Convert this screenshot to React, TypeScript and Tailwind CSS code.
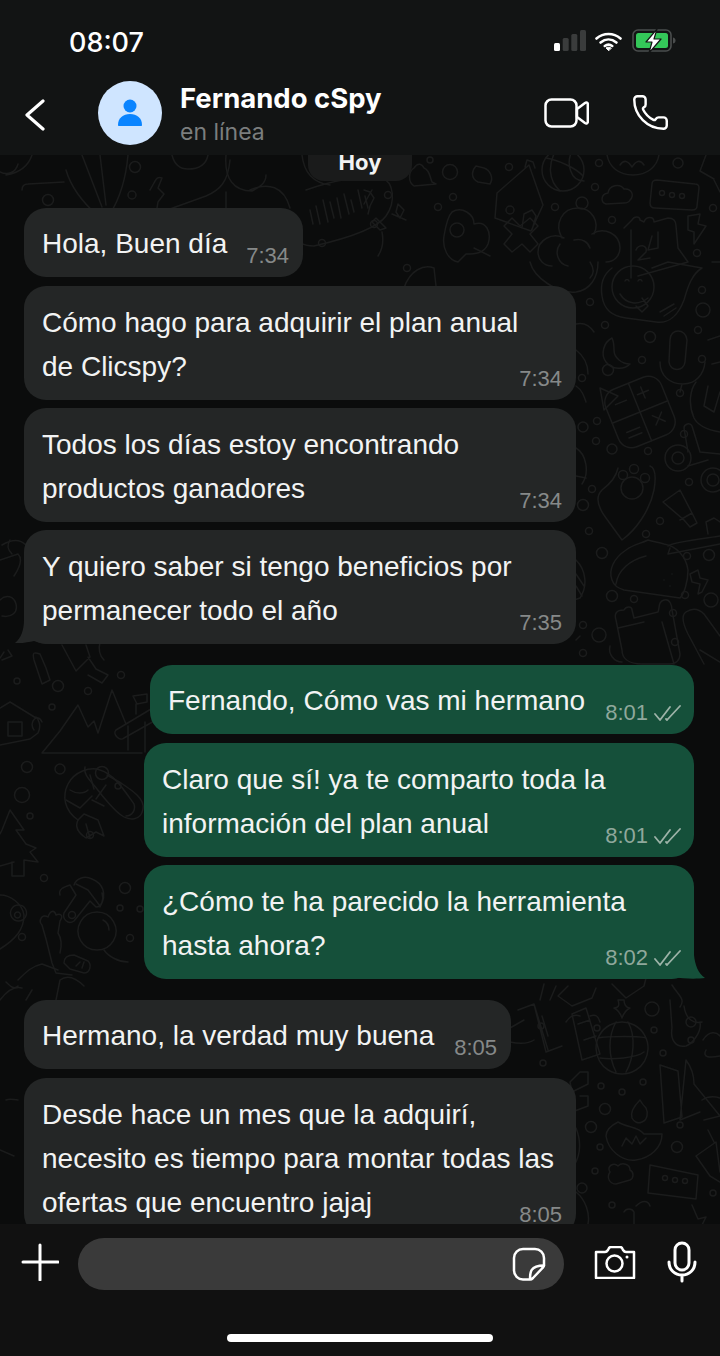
import type { ReactNode } from "react";
import { Phone } from "lucide-react";

const dots: [number, number, number][] = [
  [48, 200, 5.5], [135, 167, 5.5], [132, 195, 4], [430, 160, 3], [450, 172, 7.5], [509, 167, 3.5], [388, 195, 3.5], [453, 197, 3.5], [438, 207, 3.5], [374, 224, 3.5],
  [322, 243, 3.5], [457, 230, 7], [407, 268, 3.5], [599, 163, 3.5], [678, 163, 5], [595, 187, 3.5], [582, 203, 6], [555, 207, 3.5], [612, 220, 3.5], [713, 208, 3.5],
  [697, 253, 3.5], [702, 290, 3.5], [703, 310, 7], [698, 330, 3.5], [590, 302, 3.5], [605, 325, 3.5], [650, 337, 5.5], [642, 360, 3.5], [608, 370, 5.5], [702, 359, 3.5],
  [582, 378, 3.5], [680, 393, 3.5], [597, 421, 3.5], [583, 427, 5], [596, 441, 3.5], [612, 449, 5], [648, 451, 3.5], [684, 434, 3.5], [689, 482, 3.5], [592, 489, 3.5],
  [583, 505, 5.5], [660, 521, 3.5], [646, 534, 3.5], [589, 531, 3.5], [602, 553, 5.5], [687, 556, 3.5], [709, 555, 5.5], [612, 596, 5.5], [634, 599, 3.5], [685, 595, 3.5],
  [711, 600, 7], [673, 613, 3.5], [583, 625, 3.5], [599, 635, 7], [675, 642, 3.5], [583, 653, 3.5], [563, 170, 21], [633, 287, 21],
  [17, 681, 3], [58, 686, 5.5], [88, 691, 3.5], [52, 707, 3], [121, 675, 3.5], [27, 767, 5.5], [60, 769, 5], [118, 786, 3], [22, 795, 7.5], [30, 816, 3], [90, 835, 3.5],
  [44, 878, 3.5], [125, 888, 5.5], [120, 908, 3], [72, 915, 3.5], [22, 937, 3.5], [130, 938, 3.5], [140, 909, 3], [102, 773, 6.5],
  [597, 1028, 3], [541, 1026, 3], [652, 1009, 7], [654, 1030, 3], [691, 1022, 5], [691, 1040, 3], [663, 1053, 3], [543, 1063, 3], [601, 1086, 3], [622, 1092, 3],
  [643, 1082, 3], [605, 1109, 5.5], [591, 1127, 5.5], [600, 1147, 3], [680, 1125, 3], [677, 1147, 5.5], [595, 1171, 3], [582, 1188, 5], [612, 1205, 3], [713, 1193, 3],
  [665, 1178, 2.5], [675, 1180, 2.5], [685, 1181, 2.5], [662, 193, 2.5], [672, 195, 2.5], [682, 196, 2.5], [510, 210, 4], [623, 475, 4.5], [634, 469, 4.5], [645, 478, 4.5],
  [632, 488, 11], [678, 458, 13], [678, 458, 6], [713, 480, 12], [713, 480, 6],
];

const doodles: string[] = [
  // top strip
  "M0 172c8 4 16 0 18-8M32 155c-4 12-14 18-26 20", "M22 190c0-4 2-6 6-6l36-2", "M66 170c4 14 14 30 32 46l12-2c10-16 16-36 18-59M82 155l20 52M100 155l6 50",
  "M150 190c6-10 6-14 12-12l-4 10 6 6-6 8-2 12 50-18c14-6 22-14 24-36M172 155c2 8 6 14 16 14s18-4 20-14",
  "M226 155c-2 24 8 36 26 36 8-4 14-8 14-16M226 192v20M250 190c18-8 34-4 40 18", "M302 155c2 18 12 28 28 30M414 168c4-6 8-4 10 0 6 2 6 10 8 14l4 2-22 2c-6-4-6-14 0-18z",
  "M306 190c28-10 62-16 76-12 12 4 14 24 4 38-10 14-46 24-72 30-12 0-18-4-18-14",
  "M310 210l3 14M316 206l4 18M323 200l5 22M330 202l4 16M337 198l4 20M344 194l5 20M351 200l3 12M358 190l4 18M365 196l3 12",
  "M364 190l6 2 4 6-4 8-2 8M372 190l-8 14", "M386 228l-10-10-4 4 8 8zM382 232c2 10 0 18-4 24", "M396 212l2-8 6 6-4 8zM392 214l14 6",
  "M452 212c10-6 22 2 22 12 12-4 18 8 14 20-4 10-14 10-22 10l-8 8c-10-2-16-14-14-26 2-12 4-20 8-24z",
  "M474 248l16 8M404 288c6-18 20-24 30-20l2 18", "M520 226l-8-8-8 8 8 8-8 10 8 8 10-8 8 8 8-8-8-10 8-8-8-8z",
  "M476 166c-4 4-6 12 2 16l12 2c4-6 0-14-6-16z",
  // house, ball, lotus
  "M497 193l32-28 14 40-12 26-36-13zM525 167l2-7 6 2 2 6M522 228l2-14 8-4 4 6-4 14",
  "M546 158c12 2 30 10 37 18M556 150c-8 14-8 30 4 41M572 151c-6 12-2 30 12 30", "M607 155c2 12 12 20 26 20s24-8 26-20M620 165c4-6 8-4 12 2 4-6 8-8 12-2",
  "M652 184c0-3 2-4 5-4l38 4c3 0 4 2 4 4l-2 18c0 3-2 4-5 4l-37-2c-3 0-5-2-5-5z", "M606 204c-6-2-5-10 2-11 1-8 12-10 16-4 7-1 11 6 6 11-1 2-3 3-6 3z",
  // flower
  "M562 238c-8-14 0-30 16-30 14 0 22 14 16 26", "M564 238c-12-6-26 2-26 14 0 8 6 14 14 14", "M592 234c12-8 28 0 28 14 0 8-6 14-14 14", "M560 244c-6 8-2 20 8 22M574 240c8-2 14 2 16 8",
  "M530 262c4 16 28 32 46 30 14-2 22-14 22-30M590 262c4 6 4 12 0 16",
  // smiley + cake
  "M612 268c-8 6-12 16-10 28 2 14 10 20 24 22l30 4c12 2 22-6 28-22 4-14 8-26 18-32l-34-6-16 6", "M625 281c1-2 3-2 4 0M638 281c1-2 3-2 4 0M620 294c6 10 18 12 28 4M642 298l6 8-6 6-6-6",
  "M660 312l14-8M664 316l12-8", "M624 228l8-8c2-4 8-4 8 0l4 2c2-6 10-6 10 0l14-4c6 0 8 4 8 8l2 22 10 14-50 14M631 230v48", "M636 250c2-6 12-6 10 2l-8 8 12-2M652 236l-4 14 10-2M658 232v16",
  "M688 216l12-2-2 10 8 2-12 18v-12l-6-2z", "M712 262h8M714 180l6 12M706 155l-6 16 14 8",
  // moon, mic
  "M612 338c-8 4-12 16-6 24 6 8 18 8 24 2-8 0-16-6-16-14 0-4 0-8-2-12z", "M670 340c0-12 16-12 17 0l-2 22c-1 10-15 10-16 0zM660 362c0 14 10 22 23 22s21-10 22-22M682 384l-2 8",
  "M708 340l12-4M712 364l8-2", "M576 350c8 6 12 14 12 24M576 324c8-2 14 2 18 8",
  "M600 388l18 8-14 14zM576 386c6 4 8 10 10 16", "M696 382c-6 8-8 22-2 36 4 8 14 12 26 14M708 386l-4 20 10 6 6-20", "M576 448c10 6 14 24 6 36M576 476l10 2M576 560c10 10 12 26 4 38l-6 2M576 574l8 12M576 586l6 10",
  // paw, thimble, knife
  "M618 468c-2 10-8 16-16 22-8 8-2 20 4 28l16 22c14-10 28-30 32-50 2-12 2-22-4-24", "M663 502l17-12 12 23 5 10-7 4-6-7zM680 520l12-7",
  "M668 546c4-4 40-8 52-10M670 548l-2 6 52-10M708 534l-2-12 8-4 6 4", "M688 452l-4-24c0-4 6-6 8-2l8 26M688 466l20-6M700 452l20 2", "M690 574l8-4 2 8 8 2-6 12-4 2 2-10-8-2z",
  // taco, bag, rocket
  "M612 580c-4-10 2-22 14-30 8-6 14-6 22-10 6 2 10 2 16 4 12 2 22 12 24 26 0 12-4 24-8 28l-56-8c-6-2-10-4-12-10zM616 584c2-14 14-24 30-28", "M664 580h.01M672 574h.01M670 586h.01",
  "M616 620c-2-6 0-10 8-10 2-4 8-4 8 0l2 8 24-6c2-6 0-10 6-12 6-2 8 6 8 10l8 44c0 6-4 10-10 10h-28c-14 0-20-6-20-14zM618 628l26-6M662 622l12 42", "M610 646c-2 8 4 16 12 16",
  "M686 612c6-4 12-4 18 2l16 22M686 612c-6 4-2 14 2 22l16 30M700 650l20 12M576 640l4-4",
  // left
  "M2 545c10-6 18-6 24 0M0 600c6-6 14-4 16 4 2 8-4 14-14 12", "M0 560l18-6c6 6 0 16-4 22", "M2 660l10-4-4-6M0 658l4-6", "M10 540c-4 6-2 10 2 14",
  "M34 660c-2-8 0-8 6-6l6 14 4 12-8 4zM62 645l14 26 14-14-4-12M88 657l8 12 12 6-6 8-14-8M100 642c-2 8 0 14 4 18",
  "M0 708l10-6 26 16M0 745l30-6 8-6c4-8 0-14-2-16M8 722h14v14H8zM34 730c-6-8 4-18 8-8",
  "M42 753l18-22 18-26 10 22 6-6 4 12 14-43 14 34M42 753h100M116 730l40-24M124 738l32-18M116 730c-4 4 4 12 8 8M133 696l14-2v8l-10 2zM136 704v10", "M128 726v24M145 722v30",
  "M85 767c-2 8 6 14 12 22 6 8 18 22 24 26 8 6 20 6 22-6 2-10-10-18-22-26l-14-8",
  "M78 820c-14-10-16-24-10-36 6-12 22-18 32-14 14 4 24 20 34 34 2 6-2 12-8 12", "M66 800l14 8 12-12M70 790c6 4 14 4 18 0M90 775l4 14M106 785l-10 14M104 806l-12-6",
  "M78 820c-4 8 2 14 8 18l10-6 8 4-6-16-14-6zM90 838l-4-14",
  "M10 810l-8 20-2 4M10 810l14 20-8 0 10 14 10 4-6 4 8 10-14-2v16h-12v-14M0 866l14-4",
  "M60 895c-2-6 4-8 10-10l6 10-12 18c-2 6 4 12 10 8l16-20 6 6c6 0 8-8 6-14M74 885c2-6 10-10 18-6 10 4 16 14 8 28", "M76 884l12 6 12 16",
  "M0 895c10 0 22 8 24 20 0 14-8 24-24 34", "M18 905a8 8 0 1 0 1 0M17 912a3 3 0 1 0 1 0",
  "M42 925c-4-4 0-12 6-8 2-6 6-8 8-2 4-2 8 0 4 6l-2 12c4 6 4 12 2 20M42 925l4 14 6 24 4 10 16 2",
  "M97 912a19 19 0 1 0 .1 0M103 920c4 2 6 6 6 10", "M104 950c4 6 14 12 24 12", "M74 955l14 6c4 4 2 12-4 12l-14-4-6-6c0-6 4-8 10-8zM76 966l4-4M82 968l2-6",
  "M18 980c8-8 14-14 24-16l16 6M6 982c4 4 8 8 12 4M32 990l-6 10M60 980c8-6 16-2 24 6M60 980l-4 20M0 1000c6-8 14-14 22-12",
  "M6 1100c4-2 8 0 12 0M0 1150l14 6",
  // lower right
  "M540 1000l4-16M550 1000l6-14M568 986l-10 10 14 10 20-8 4-10M612 984l14 14 18-12 2-8",
  "M518 1010l16-6 12 48 16-6M534 1004l14 46M542 1016l6 20M572 1014l14-6 14 46-18 6zM578 1024l12-4M584 1040l12-4",
  "M510 1028l14-8M534 1040c-6 4-14 4-24 2M580 1016c-6-2-10 0-14 6M590 1016c6-2 8 0 10 6", "M618 1000c2 6 0 8-4 8 4 2 6 4 8 10 2-6 4-8 8-10-4 0-6-4-6-8z",
  "M622 1022a26 26 0 1 0 .1 0M598 1038c10-2 44-2 48 0M600 1058c12 2 36 0 44-6M616 1022c-8 14-8 34 0 50M628 1022c8 14 6 36-2 50",
  "M672 985c6 10 14 14 8 22M670 1000l2 28c-2 12 4 20 14 18 6-2 16-14 14-24M684 1006c2 14 10 18 18 16", "M703 1040c6-10 14-8 17-4M706 1050c-4 8 4 8 14 6",
  "M660 1065l18 6 4 46-18 6zM686 1060c6 8 8 16 8 24l26 32M686 1060l-6 60 20-8",
  "M580 1072l8 0v12l-16 8-2-10zM580 1096l8 0v10l-16 6-2-8", "M640 1100c-6 6-10 12-8 18 2 4 6 6 10 4 6-2 6-10 4-14-2-2-4-4-6-8z",
  "M618 1122c-8 4-12 8-12 14 2 14 16 26 30 24 14-2 26-12 26-26l-18 0c-6-8-16-6-26-12zM622 1146l4-8 6 6 4-8 4 8 6-6",
  "M650 1165l48 10-2 24-48-6z", "M610 1172c-4-6 4-10 8-6 4-4 12-2 12 4 4 2 4 8 0 10l-14 4c-6 0-10-6-6-12z", "M636 1206c6-6 12-6 14 0M624 1212c2-4 8-4 10 0v12M692 1205l6 14 8-2-4 8",
  "M702 1100c6-4 12-4 18-2M704 1120l16-4M708 1130l6 12M696 1156l20-14 4 30M696 1156l14 20 10 6",
  "M576 1128c4 10 6 24-2 38M576 1192c10 8 14 22 12 32M530 1224c2-4 10-4 14 0",
];

function Doodles() {
  return (
    <svg className="absolute inset-0 h-full w-full" viewBox="0 155 720 1069" fill="none" stroke="#1b1c1c" strokeWidth="1.5" strokeLinecap="round" strokeLinejoin="round">
      {dots.map(([cx, cy, r], i) => <circle key={i} cx={cx} cy={cy} r={r} />)}
      {doodles.map((d, i) => <path key={i} d={d} />)}
      <g transform="rotate(-22 640 412)">
        <rect x="610" y="381" width="60" height="62" rx="14" />
        <path d="M640 381v62M610 412h60M620 396h12M650 389v12M644 395h12M620 426h14M620 432h14M650 420l10 10m0-10l-10 10" />
      </g>
    </svg>
  );
}

function Ticks() {
  return (
    <svg width="27" height="18" viewBox="0 0 27 18" fill="none" stroke="#9db3a8" strokeWidth="1.8" strokeLinecap="round" strokeLinejoin="round">
      <path d="M1 10l5 6L16 3M12 15l1 1L26 2" />
    </svg>
  );
}

function Bubble({ mine, time, className, tail, children }: { mine?: boolean; time: string; className: string; tail?: boolean; children: ReactNode }) {
  return (
    <div className={`relative rounded-[22px] text-[28px] leading-[44px] text-[#f2f3f3] ${mine ? "self-end bg-[#15503a]" : "self-start bg-[#242626]"} ${className}`}>
      {tail && !mine && (
        <svg className="absolute bottom-0 left-[-10px]" width="38" height="24" viewBox="0 0 38 24" fill="#242626">
          <path d="M10 0c0 10-3 18-9 23 8 .5 14-1 19-2 5 2 12 3 18 3V0z" />
        </svg>
      )}
      {tail && mine && (
        <svg className="absolute bottom-0 right-[-11px]" width="34" height="24" viewBox="0 0 34 24" fill="#15503a">
          <path d="M23 0c1 10 4 18 11 23-8 1-20 1-33-1V0z" />
        </svg>
      )}
      <span className="relative">{children}</span>
      <div className={`absolute bottom-[6px] flex items-center gap-[6px] text-[22px] leading-[30px] ${mine ? "right-[13px] text-[#8fa89c]" : "right-[14px] text-[#868989]"}`}>
        <span>{time}</span>
        {mine && <Ticks />}
      </div>
    </div>
  );
}

export default function App() {
  return (
    <div className="flex h-[1356px] w-[720px] flex-col overflow-hidden bg-[#111111] font-['Liberation_Sans',sans-serif]">
      <header className="z-10 h-[155px] shrink-0 bg-[#121414]">
        <div className="flex h-[81px] items-start pl-[69px] pr-[44px] pt-[25px]">
          <span className="font-['Inter',sans-serif] text-[27px] font-medium leading-[36px] text-white">08:07</span>
          <div className="ml-auto mt-[4px] flex items-start">
            <svg width="32" height="24" viewBox="0 0 32 24" fill="#3a3c3c">
              <rect x="0" y="14" width="6" height="8" rx="1.5" fill="#fff" />
              <rect x="8.7" y="9" width="6" height="13" rx="1.5" />
              <rect x="17.3" y="5" width="6" height="17" rx="1.5" />
              <rect x="26" y="1" width="6" height="21" rx="1.5" />
            </svg>
            <svg className="ml-[9px] mt-[3px]" width="27" height="19" viewBox="0 0 27 19" fill="none" stroke="#fff" strokeWidth="2.6" strokeLinecap="round">
              <path d="M1.5 6.5c7-6 17-6 24 0M5.6 10.5c4.8-4 11-4 15.8 0M9.8 14c2.300-1.700 5.100-1.700 7.400 0" />
              <path d="M13.500 18.500l-2.500-2.500c1.500-1 3.500-1 5 0z" fill="#fff" stroke="#fff" strokeWidth="1" />
            </svg>
            <svg className="ml-[10px]" width="44" height="24" viewBox="0 0 44 24" fill="none">
              <rect x="1" y="1" width="38" height="21" rx="5" stroke="#4a4d4d" strokeWidth="1.600" />
              <rect x="4" y="4" width="32" height="15" rx="2.500" fill="#34c759" />
              <path d="M41 8.500c2 .5 2.500 1.500 2.500 3s-.5 2.500-2.500 3z" fill="#4a4d4d" />
              <path d="M25 0L14 13h6l-3 11 12-14h-7z" fill="#fff" stroke="#121414" strokeWidth="1.200" strokeLinejoin="round" />
            </svg>
          </div>
        </div>
        <div className="flex items-start">
          <svg className="ml-[24px] mt-[18px]" width="22" height="32" viewBox="0 0 22 32" fill="none" stroke="#fff" strokeWidth="3.200" strokeLinecap="round" strokeLinejoin="round">
            <path d="M19 2L3 16l16 14" />
          </svg>
          <div className="ml-[52px] flex h-[64px] w-[64px] items-center justify-center rounded-full bg-[#cfe5ff]">
            <svg width="26" height="28" viewBox="0 0 26 28" fill="#0a84ff">
              <circle cx="13" cy="7" r="6.500" />
              <path d="M1 26c0-7 5-11 12-11s12 4 12 11c0 .6-.4 1-1 1H2c-.6 0-1-.4-1-1z" />
            </svg>
          </div>
          <div className="ml-[18px] font-['Inter',sans-serif]">
            <div className="mt-[1px] text-[27.5px] font-bold leading-[32px] text-white">Fernando cSpy</div>
            <div className="mt-[2px] text-[23px] leading-[32px] text-[#7b7e7e]">en línea</div>
          </div>
          <svg className="ml-auto mt-[17px]" width="45" height="30" viewBox="0 0 45 30" fill="none" stroke="#fff" strokeWidth="2.500" strokeLinejoin="round">
            <rect x="1.500" y="1.500" width="31" height="27" rx="6" />
            <path d="M33 11l8-6c1.500-1 2.800-.2 2.800 1V24c0 1.200-1.300 2-2.800 1L33 19z" />
          </svg>
          <Phone className="ml-[42px] mr-[50px] mt-[12px] -scale-x-100 rotate-90" size={39} color="#fff" strokeWidth={1.500} />
        </div>
      </header>

      <main className="relative min-h-0 flex-1 overflow-hidden bg-[#0b0c0c]">
        <Doodles />
        <div className="relative flex flex-col pl-[24px] pr-[26px]">
          <div className="ml-[2px] mt-[-18px] h-[44px] w-[104px] self-center rounded-[16px] bg-[#1a1b1b] pt-[8px] text-center font-['Inter',sans-serif] text-[22px] font-bold leading-[34px] text-[#f2f3f3]">Hoy</div>
          <Bubble time="7:34" className="mt-[27px] h-[69px] w-[279px] pl-[18px] pt-[14px]">Hola, Buen día</Bubble>
          <Bubble time="7:34" className="mt-[9px] h-[114px] w-[552px] pl-[18px] pt-[15px]">Cómo hago para adquirir el plan anual<br />de Clicspy?</Bubble>
          <Bubble time="7:34" className="mt-[8px] h-[114px] w-[552px] pl-[18px] pt-[15px]">Todos los días estoy encontrando<br />productos ganadores</Bubble>
          <Bubble time="7:35" tail className="mt-[8px] h-[114px] w-[552px] pl-[18px] pt-[15px]">Y quiero saber si tengo beneficios por<br />permanecer todo el año</Bubble>
          <Bubble mine time="8:01" className="mt-[21px] h-[69px] w-[544px] pl-[18px] pt-[14px]">Fernando, Cómo vas mi hermano</Bubble>
          <Bubble mine time="8:01" className="mt-[9px] h-[114px] w-[550px] pl-[18px] pt-[15px]">Claro que sí! ya te comparto toda la<br />información del plan anual</Bubble>
          <Bubble mine time="8:02" tail className="mt-[8px] h-[114px] w-[550px] pl-[18px] pt-[15px]">¿Cómo te ha parecido la herramienta<br />hasta ahora?</Bubble>
          <Bubble time="8:05" className="mt-[21px] h-[69px] w-[487px] pl-[18px] pt-[14px]">Hermano, la verdad muy buena</Bubble>
          <Bubble time="8:05" className="mt-[9px] h-[158px] w-[552px] shrink-0 pl-[18px] pt-[15px]">Desde hace un mes que la adquirí,<br />necesito es tiempo para montar todas las<br />ofertas que encuentro jajaj</Bubble>
        </div>
      </main>

      <footer className="z-10 h-[132px] shrink-0 bg-[#111111]">
        <div className="flex items-start pt-[14px]">
          <svg className="ml-[21px] mt-[5px]" width="38" height="38" viewBox="0 0 38 38" fill="none" stroke="#fff" strokeWidth="3" strokeLinecap="round">
            <path d="M19 2v35M2 19h35" />
          </svg>
          <div className="ml-[19px] flex h-[52px] w-[486px] items-center justify-end rounded-full bg-[#3a3a3a] pr-[18px]">
            <svg width="34" height="34" viewBox="0 0 34 34" fill="none" stroke="#fff" strokeWidth="2.500" strokeLinejoin="round">
              <path d="M11 2h12c5 0 9 4 9 9v7c0 1-.5 2-1.500 3L21 31c-1 1-2 1.500-3 1.500h-7c-5 0-9-4-9-9V11c0-5 4-9 9-9z" />
              <path d="M18 32.500c0-7 0-14 14-14-1 0-2 1-2 2" />
            </svg>
          </div>
          <svg className="ml-[30px] mt-[8px]" width="42" height="33" viewBox="0 0 42 33" fill="none" stroke="#fff" strokeWidth="2.500" strokeLinejoin="round">
            <path d="M2 6h9c1.500 0 2-.5 3-2l1-2c.5-.7 1-1 2-1h9c1 0 1.500.3 2 1l1 2c1 1.500 1.500 2 3 2h8v26H2z" />
            <circle cx="20.500" cy="17.500" r="8" />
            <circle cx="33" cy="11" r="1.500" fill="#fff" stroke="none" />
          </svg>
          <svg className="ml-[31px] mt-[3px]" width="30" height="42" viewBox="0 0 30 42" fill="none" stroke="#fff" strokeWidth="3" strokeLinecap="round">
            <rect x="8" y="2" width="14" height="27" rx="7" />
            <path d="M2 21c0 8 6 13 13 13s13-5 13-13M15 34v6" />
          </svg>
        </div>
        <div className="mx-auto mt-[44px] h-[8px] w-[266px] rounded-full bg-white" />
      </footer>
    </div>
  );
}
